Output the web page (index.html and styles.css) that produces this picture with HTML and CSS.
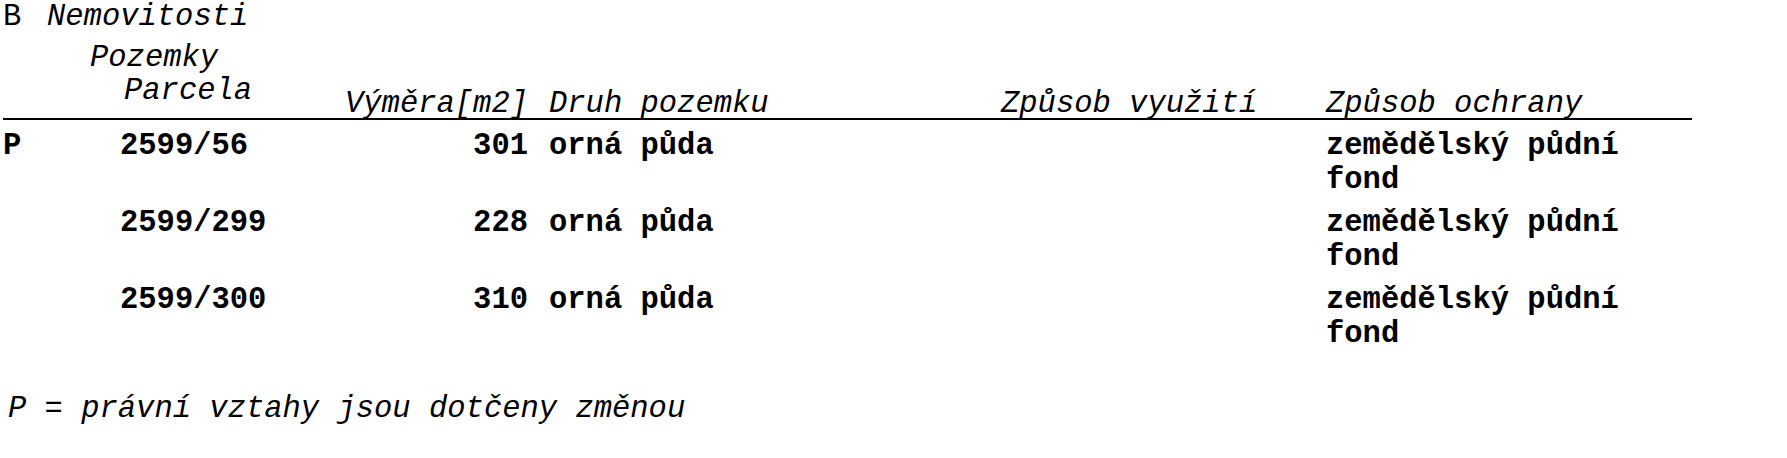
FILE: index.html
```html
<!DOCTYPE html>
<html lang="cs">
<head>
<meta charset="utf-8">
<title>B Nemovitosti</title>
<link rel="stylesheet" href="styles.css">
</head>
<body>
<div class="page">
  <div class="title"><span class="title-letter">B</span><span class="title-text">Nemovitosti</span></div>
  <div class="section">Pozemky</div>
  <div class="grid thead">
    <div class="th th-flag"></div>
    <div class="th th-parcel">Parcela</div>
    <div class="th th-area">Výměra[m2]</div>
    <div class="th th-kind">Druh pozemku</div>
    <div class="th">Způsob využití</div>
    <div class="th">Způsob ochrany</div>
  </div>
  <div class="tbody">
    <div class="grid row">
      <div class="td">P</div>
      <div class="td td-parcel">2599/56</div>
      <div class="td td-area">301</div>
      <div class="td td-kind">orná půda</div>
      <div class="td"></div>
      <div class="td">zemědělský půdní fond</div>
    </div>
    <div class="grid row">
      <div class="td"></div>
      <div class="td td-parcel">2599/299</div>
      <div class="td td-area">228</div>
      <div class="td td-kind">orná půda</div>
      <div class="td"></div>
      <div class="td">zemědělský půdní fond</div>
    </div>
    <div class="grid row">
      <div class="td"></div>
      <div class="td td-parcel">2599/300</div>
      <div class="td td-area">310</div>
      <div class="td td-kind">orná půda</div>
      <div class="td"></div>
      <div class="td">zemědělský půdní fond</div>
    </div>
  </div>
  <div class="note">P = právní vztahy jsou dotčeny změnou</div>
</div>
</body>
</html>
```

FILE: styles.css
```css
html, body {
  margin: 0;
  padding: 0;
  background: #fff;
}

body {
  font-family: "Courier New", "Nimbus Mono PS", "Nimbus Mono L", "FreeMono", "Liberation Mono", monospace;
  font-size: 30.5px;
  color: #000;
}

.page {
  padding-left: 3px;
  width: 1689px;
}

.title {
  display: flex;
  line-height: 34px;
}

.title-letter {
  width: 18px;
}

.title-text {
  margin-left: 26px;
  font-style: italic;
}

.section {
  margin-top: 8px;
  padding-left: 87px;
  line-height: 33px;
  font-style: italic;
}

.grid {
  display: grid;
  grid-template-columns: 116px 221px 188px 473px 325px 366px;
}

.thead {
  align-items: end;
  border-bottom: 2px solid #000;
}

.th {
  font-style: italic;
  line-height: 28px;
  white-space: nowrap;
}

.th-parcel {
  align-self: start;
  padding-left: 5px;
  line-height: 33px;
  padding-bottom: 10px;
}

.th-area {
  text-align: right;
}

.th-kind {
  padding-left: 21px;
}

.tbody {
  margin-top: 5px;
}

.row {
  padding: 5px 0 5px;
  line-height: 33.5px;
  font-weight: bold;
  align-items: start;
}

.td-parcel {
  padding-left: 1px;
}

.td-area {
  text-align: right;
}

.td-kind {
  padding-left: 21px;
}

.note {
  margin-top: 37px;
  padding-left: 5px;
  line-height: 33px;
  font-style: italic;
}
```
